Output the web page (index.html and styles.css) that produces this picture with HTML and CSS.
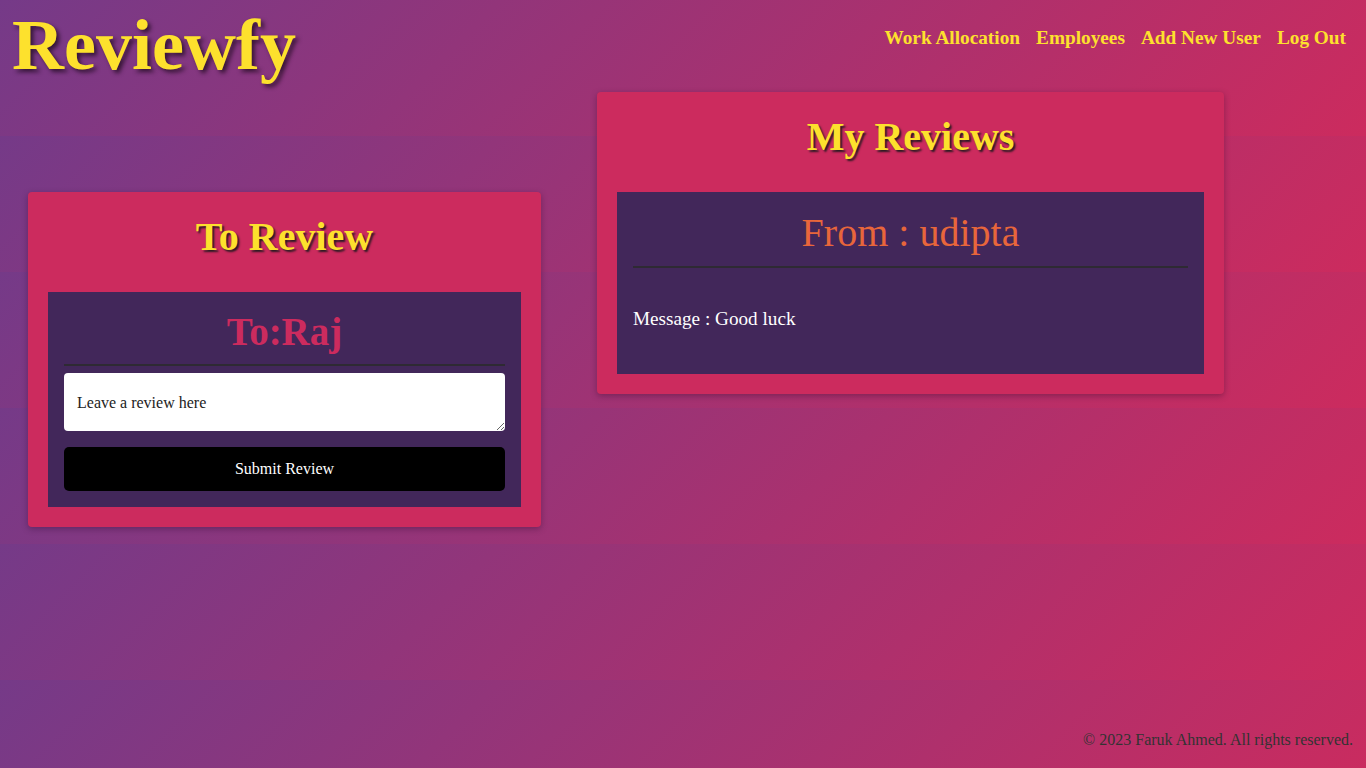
FILE: index.html
```html
<!DOCTYPE html>
<html lang="en">
<head>
<meta charset="utf-8">
<title>Reviewfy</title>
<link rel="stylesheet" href="styles.css">
</head>
<body>
<div class="page">
  <header class="topbar">
    <h1 class="brand">Reviewfy</h1>
    <nav class="nav">
      <a href="#">Work Allocation</a>
      <a href="#">Employees</a>
      <a href="#">Add New User</a>
      <a href="#">Log Out</a>
    </nav>
  </header>

  <main class="boards">
    <section class="card card-to-review">
      <h2 class="card-title">To Review</h2>
      <div class="panel">
        <h3 class="panel-title panel-title-to">To:Raj</h3>
        <hr class="rule">
        <textarea class="review-input" placeholder="Leave a review here"></textarea>
        <button class="submit-btn" type="button">Submit Review</button>
      </div>
    </section>

    <section class="card card-my-reviews">
      <h2 class="card-title">My Reviews</h2>
      <div class="panel">
        <h3 class="panel-title panel-title-from">From : udipta</h3>
        <hr class="rule">
        <p class="message">Message : Good luck</p>
      </div>
    </section>
  </main>

  <footer class="footer">© 2023 Faruk Ahmed. All rights reserved.</footer>
</div>
</body>
</html>
```

FILE: styles.css
```css
html, body {
  margin: 0;
  padding: 0;
}

body {
  font-family: "Liberation Serif", "Times New Roman", serif;
  background-color: #a0306f;
  background-image: linear-gradient(135deg, #753a88 0%, #cc2b5e 100%);
  background-size: 100% 136px;
  background-repeat: repeat;
}

.page {
  min-height: 100vh;
  display: flex;
  flex-direction: column;
}

.topbar {
  display: flex;
  justify-content: space-between;
  align-items: flex-start;
  height: 92px;
}

.brand {
  margin: 5px 0 0 12px;
  font-size: 72px;
  line-height: 80px;
  font-weight: bold;
  color: #fde12d;
  text-shadow: 3px 3px 4px rgba(30, 10, 30, 0.75);
}

.nav {
  display: flex;
  gap: 16px;
  margin-top: 27px;
  padding-right: 20px;
}

.nav a {
  font-size: 19.3px;
  line-height: 22px;
  font-weight: bold;
  color: #fde12d;
  text-decoration: none;
}

.boards {
  display: flex;
  align-items: flex-start;
  gap: 56px;
  padding: 0 28px;
}

.card {
  background: #cc2b5e;
  border-radius: 4px;
  padding: 20px;
  box-shadow: 0 2px 6px rgba(40, 10, 40, 0.35);
}

.card-to-review {
  width: 473px;
  margin-top: 100px;
}

.card-my-reviews {
  width: 587px;
}

.card-title {
  margin: 2px 0 32px;
  font-size: 40px;
  line-height: 46px;
  font-weight: bold;
  text-align: center;
  color: #fde12d;
  text-shadow: 2px 2px 2px #2a1a22;
}

.panel {
  background: #42275a;
  padding: 16px;
}

.panel-title {
  margin: 2px 0 10px;
  text-align: center;
}

.panel-title-to {
  font-size: 39px;
  line-height: 44px;
  font-weight: bold;
  color: #cc2b5e;
}

.panel-title-from {
  font-size: 40px;
  line-height: 46px;
  font-weight: normal;
  color: #e8663b;
}

.rule {
  margin: 0;
  border: none;
  border-top: 2px solid #2e2a33;
  height: 0;
}

.review-input {
  display: block;
  box-sizing: border-box;
  width: 100%;
  height: 58px;
  margin: 7px 0 16px;
  padding: 21px 13px 17px;
  border: none;
  border-radius: 4px;
  background: #fff;
  font-family: "Liberation Serif", "Times New Roman", serif;
  font-size: 16px;
  color: #222;
}

.review-input::placeholder {
  color: #222;
  opacity: 1;
}

.submit-btn {
  display: block;
  width: 100%;
  height: 44px;
  border: none;
  border-radius: 5px;
  background: #000;
  color: #fff;
  font-family: "Liberation Serif", "Times New Roman", serif;
  font-size: 16px;
}

.message {
  margin: 40px 0 28px;
  font-size: 19.2px;
  line-height: 22px;
  color: #fff;
}

.footer {
  margin-top: auto;
  padding: 0 13px 19px;
  text-align: right;
  font-size: 16px;
  color: #333;
}
```
